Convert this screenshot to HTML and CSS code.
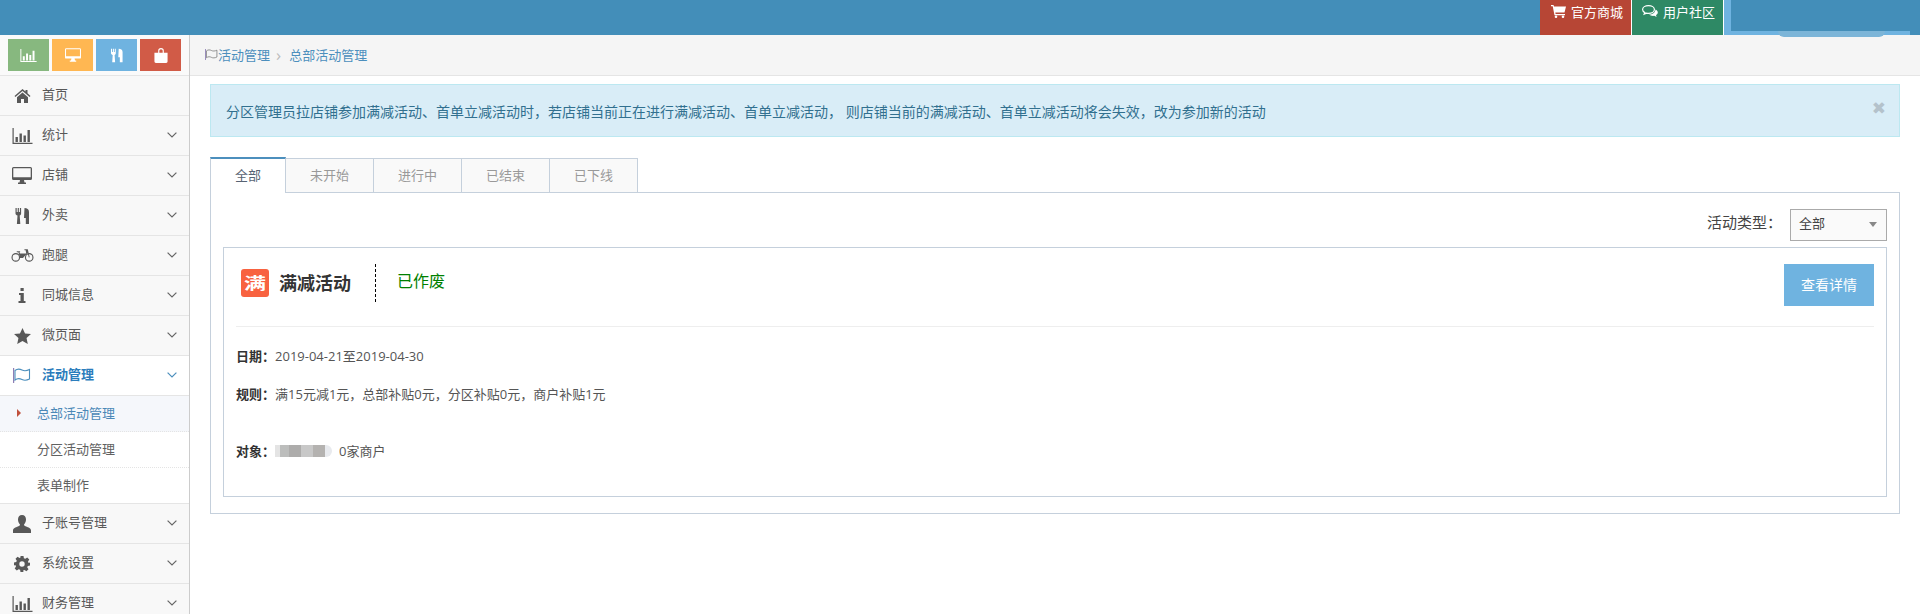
FILE: index.html
```html
<!DOCTYPE html>
<html lang="zh-CN">
<head>
<meta charset="utf-8">
<title>总部活动管理</title>
<link rel="stylesheet" href="styles.css">
</head>
<body>
<svg class="defs" width="0" height="0" aria-hidden="true">
  <symbol id="i-chart" viewBox="0 0 20 16"><path d="M0 0h1.200v14.800H20V16H0z"/><path d="M3 9h2.400v5H3zM7 5.500h2.400V14H7zM11 7.500h2.400V14H11zM15 2h2.400v12H15z"/></symbol>
  <symbol id="i-desk" viewBox="0 0 20 17"><path d="M1.500 0h17A1.500 1.500 0 0 1 20 1.500v10a1.500 1.500 0 0 1-1.500 1.500H12l.5 2.500H14V17H6v-1.500h1.500L8 13H1.500A1.500 1.500 0 0 1 0 11.500v-10A1.500 1.500 0 0 1 1.500 0zM1.300 1.300v8.900h17.400V1.300z" fill-rule="evenodd"/></symbol>
  <symbol id="i-fork" viewBox="0 0 14 16"><path d="M0 0h1.200v4h1V0h1.200v4h1V0h1.200v5.500c0 1-.6 1.700-1.400 2L4.800 16H1.400L2 7.500C.9 7.200 0 6.500 0 5.500zM9 0c2.500 0 4.500 1 4.500 4v12h-3.200v-6H8.500z"/></symbol>
  <symbol id="i-bag" viewBox="0 0 14 16"><path d="M4 5V3a3 3 0 0 1 6 0v2h4v9.500a1.500 1.500 0 0 1-1.500 1.500h-11A1.500 1.500 0 0 1 0 14.500V5zm1.200 0h3.600V3a1.800 1.800 0 0 0-3.600 0z" fill-rule="evenodd"/></symbol>
  <symbol id="i-home" viewBox="0 0 16 14"><path d="M8 0l3 2.500V1h2v3.200L16 7l-.9 1L8 2 .9 8 0 7zM2.500 8.200L8 3.500l5.500 4.700V14H9.500v-4h-3v4h-4z"/></symbol>
  <symbol id="i-bike" viewBox="0 0 24 13"><path d="M5 4a4.500 4.500 0 1 0 0 9 4.500 4.500 0 0 0 0-9zm0 1.200a3.300 3.300 0 1 1 0 6.600 3.300 3.300 0 0 1 0-6.600zM19 4a4.500 4.500 0 1 0 0 9 4.500 4.500 0 0 0 0-9zm0 1.200a3.300 3.300 0 1 1 0 6.600 3.300 3.300 0 0 1 0-6.600z" fill-rule="evenodd"/><path d="M14 0h3.500l2 8.300-.9.300-1.300-4.800-4.800 5.200h-3L7.700 3H6V2h3.500v1H8.800l.5 1.300h6.600L15.300 1H14z"/></symbol>
  <symbol id="i-info" viewBox="0 0 8 15"><path d="M2.500 0h3.200v3H2.500zM1 5h4.800v8H7.500v2H.5v-2h2V7H1z"/></symbol>
  <symbol id="i-star" viewBox="0 0 18 17"><path d="M9 0l2.700 5.800 6.300.7-4.700 4.200 1.300 6.300L9 13.800 3.400 17l1.300-6.300L0 6.500l6.300-.7z"/></symbol>
  <symbol id="i-flag" viewBox="0 0 18 15"><path d="M0 0h1.200v15H0z" fill="#8e7fb5"/><path d="M2 2.500C4.500.5 7 1 9 2s4.500 1 7.500-.5v9.500c-3 1.500-5.500 1.500-7.500.5s-4.500-1.500-7 .5z" fill="none" stroke="currentColor" stroke-width="1.100"/></symbol>
  <symbol id="i-user" viewBox="0 0 18 18"><path d="M9 0c2.600 0 4 2 4 4.500 0 2-.8 3.800-2 5 .2 1 .6 1.400 2 2 2.500 1 5 1.600 5 4V18H0v-2.500c0-2.400 2.500-3 5-4 1.400-.6 1.800-1 2-2-1.200-1.200-2-3-2-5C5 2 6.400 0 9 0z"/></symbol>
  <symbol id="i-cog" viewBox="0 0 16 16"><path d="M6.500 0h3l.4 2.200 1.400.6 1.900-1.300 2.100 2.100-1.300 1.900.6 1.400L16 6.500v3l-2.200.4-.6 1.400 1.300 1.900-2.100 2.100-1.900-1.300-1.400.6L9.500 16h-3l-.4-2.200-1.400-.6-1.900 1.300-2.100-2.100 1.300-1.900-.6-1.400L0 9.500v-3l2.200-.4.600-1.400L1.500 2.800l2.100-2.100 1.900 1.300 1-.6zM8 5.300a2.700 2.700 0 1 0 0 5.400 2.700 2.700 0 0 0 0-5.400z" fill-rule="evenodd"/></symbol>
  <symbol id="i-cart" viewBox="0 0 15 13"><path d="M0 0h2.500l.5 1.500h12l-1.500 6H4.300l.3 1.500h9.400v1.200H3.500L1.700 1.200H0z"/><circle cx="5" cy="11.700" r="1.300"/><circle cx="12" cy="11.700" r="1.300"/></symbol>
  <symbol id="i-chat" viewBox="0 0 16 13"><path d="M6.500.6C3.200.6.600 2.300.6 4.500c0 1.300.9 2.400 2.300 3.100l-.7 1.600 2.300-1c.6.100 1.300.2 2 .2 3.300 0 5.900-1.700 5.900-3.900S9.800.6 6.500.6z" fill="none" stroke="currentColor" stroke-width="1.200"/><path d="M13.500 4.500c1.300.6 2.300 1.700 2.300 3 0 1-.7 2-1.800 2.700l.6 1.800-2.300-1.200c-2 .3-4-.2-5.300-1.300 3.400 0 6.400-2 6.500-5z"/></symbol>
  <symbol id="i-down" viewBox="0 0 10 6"><path d="M.6.600L5 5 9.400.6" fill="none" stroke="currentColor" stroke-width="1.200"/></symbol>
</svg>

<header class="topbar">
  <a class="top-link top-red"><svg class="top-ico"><use href="#i-cart"/></svg>官方商城</a>
  <a class="top-link top-green"><svg class="top-ico"><use href="#i-chat"/></svg>用户社区</a>
  <div class="user-box"><div class="user-mask"></div><div class="user-blur"></div></div>
</header>

<div class="shell">
  <aside class="sidebar">
    <div class="shortcuts">
      <a class="sc sc-green"><svg class="sc-chart"><use href="#i-chart"/></svg></a>
      <a class="sc sc-orange"><svg class="sc-desk"><use href="#i-desk"/></svg></a>
      <a class="sc sc-blue"><svg class="sc-fork"><use href="#i-fork"/></svg></a>
      <a class="sc sc-red"><svg class="sc-bag"><use href="#i-bag"/></svg></a>
    </div>
    <nav>
      <a class="nav-item"><span class="nav-icon"><svg class="ic-home"><use href="#i-home"/></svg></span>首页</a>
      <a class="nav-item"><span class="nav-icon"><svg class="ic-chart"><use href="#i-chart"/></svg></span>统计<svg class="chev"><use href="#i-down"/></svg></a>
      <a class="nav-item"><span class="nav-icon"><svg class="ic-desk"><use href="#i-desk"/></svg></span>店铺<svg class="chev"><use href="#i-down"/></svg></a>
      <a class="nav-item"><span class="nav-icon"><svg class="ic-fork"><use href="#i-fork"/></svg></span>外卖<svg class="chev"><use href="#i-down"/></svg></a>
      <a class="nav-item"><span class="nav-icon"><svg class="ic-bike"><use href="#i-bike"/></svg></span>跑腿<svg class="chev"><use href="#i-down"/></svg></a>
      <a class="nav-item"><span class="nav-icon"><svg class="ic-info"><use href="#i-info"/></svg></span>同城信息<svg class="chev"><use href="#i-down"/></svg></a>
      <a class="nav-item"><span class="nav-icon"><svg class="ic-star"><use href="#i-star"/></svg></span>微页面<svg class="chev"><use href="#i-down"/></svg></a>
      <a class="nav-item nav-open"><span class="nav-icon"><svg class="ic-flag"><use href="#i-flag"/></svg></span>活动管理<svg class="chev"><use href="#i-down"/></svg></a>
      <div class="subnav">
        <a class="sub-item sub-active"><span class="sub-arrow"></span>总部活动管理</a>
        <a class="sub-item">分区活动管理</a>
        <a class="sub-item">表单制作</a>
      </div>
      <a class="nav-item"><span class="nav-icon"><svg class="ic-user"><use href="#i-user"/></svg></span>子账号管理<svg class="chev"><use href="#i-down"/></svg></a>
      <a class="nav-item"><span class="nav-icon"><svg class="ic-cog"><use href="#i-cog"/></svg></span>系统设置<svg class="chev"><use href="#i-down"/></svg></a>
      <a class="nav-item"><span class="nav-icon"><svg class="ic-chart"><use href="#i-chart"/></svg></span>财务管理<svg class="chev"><use href="#i-down"/></svg></a>
    </nav>
  </aside>

  <main class="main">
    <div class="crumbs">
      <svg class="crumb-flag"><use href="#i-flag"/></svg><span>活动管理</span><span class="crumb-sep">›</span><span>总部活动管理</span>
    </div>
    <div class="content">
      <div class="alert">
        <span>分区管理员拉店铺参加满减活动、首单立减活动时，若店铺当前正在进行满减活动、首单立减活动， 则店铺当前的满减活动、首单立减活动将会失效，改为参加新的活动</span>
        <span class="alert-close">✖</span>
      </div>
      <div class="tabs">
        <a class="tab tab-active">全部</a>
        <a class="tab">未开始</a>
        <a class="tab">进行中</a>
        <a class="tab">已结束</a>
        <a class="tab">已下线</a>
      </div>
      <section class="panel">
        <div class="filter">
          <label class="filter-label">活动类型：</label>
          <div class="select">全部<span class="caret"></span></div>
        </div>
        <article class="card">
          <div class="card-head">
            <span class="badge"><span class="badge-glyph">满</span></span>
            <h2 class="card-title">满减活动</h2>
            <span class="state">已作废</span>
            <a class="detail-btn">查看详情</a>
          </div>
          <p class="row row-date"><b>日期：</b>2019-04-21至2019-04-30</p>
          <p class="row row-rule"><b>规则：</b>满15元减1元，总部补贴0元，分区补贴0元，商户补贴1元</p>
          <p class="row row-target"><b>对象：</b><span class="blur"><i class="b0"></i><i class="b1"></i><i class="b2"></i><i class="b3"></i><i class="b4"></i><i class="b5"></i></span>0家商户</p>
        </article>
      </section>
    </div>
  </main>
</div>
</body>
</html>
```

FILE: styles.css
```css
* { box-sizing: border-box; }
html, body { margin: 0; height: 100%; overflow: hidden; background: #fff; }
body { font-family: "Open Sans", "Noto Sans CJK SC", sans-serif; font-size: 13px; color: #393939; }
.defs { position: absolute; }
svg { fill: currentColor; display: block; }

.topbar { height: 35px; background: #438eb9; display: flex; justify-content: flex-end; position: relative; z-index: 2; }
.top-link { width: 92px; height: 35px; border-right: 1px solid #fff; color: #fff; display: flex; align-items: flex-start; padding: 3px 0 0 11px; line-height: 18px; font-size: 13px; }
.top-red { background: #b74635; }
.top-green { background: #2e8965; padding-left: 10px; }
.top-ico { width: 15px; height: 13px; margin: 2px 5px 0 0; flex: none; }
.top-green .top-ico { width: 16px; }
.user-box { width: 196px; height: 35px; display: flex; flex-direction: column; position: relative; padding-left: 7px; background-image: linear-gradient(to right, #6fb3e0 186px, #438eb9 186px); }
.user-mask { width: 179px; height: 31px; background: #438eb9; }
.user-blur { position: absolute; left: 54px; top: 31px; width: 107px; height: 6px; background: #7cb5d8; border-radius: 0 0 50px 50px; }

.shell { display: flex; height: 579px; }
.sidebar { width: 190px; flex: none; background: #f7f7f7; border-right: 1px solid #ccc; overflow: hidden; }
.shortcuts { height: 41px; background: #fafafa; border-bottom: 1px solid #e5e5e5; padding: 4px 0 0 8px; display: flex; gap: 3px; }
.sc { width: 41px; height: 32px; color: #fff; display: flex; align-items: center; justify-content: center; }
.sc-green { background: #87b87f; }
.sc-orange { background: #ffb752; }
.sc-blue { background: #6fb3e0; }
.sc-red { background: #d15b47; }
.sc-chart { width: 17px; height: 13px; }
.sc-desk { width: 16px; height: 14px; }
.sc-fork { width: 12px; height: 15px; }
.sc-bag { width: 14px; height: 15px; }

.nav-item { height: 40px; border-bottom: 1px solid #e5e5e5; display: flex; align-items: center; color: #585858; background: #f8f8f8; position: relative; padding-bottom: 4px; }
.nav-icon { width: 44px; margin-right: -2px; margin-top: 4px; display: flex; justify-content: center; flex: none; color: #585858; }
.chev { width: 10px; height: 6px; position: absolute; left: 167px; top: 16px; color: #666; }
.nav-open { background: #fff; color: #2b7dbc; font-weight: 600; }
.nav-open .nav-icon, .nav-open .chev { color: #4c8fbd; }
.ic-home { width: 17px; height: 14px; }
.ic-chart { width: 21px; height: 16px; }
.ic-desk { width: 20px; height: 17px; }
.ic-fork { width: 15px; height: 16px; }
.ic-bike { width: 23px; height: 13px; }
.ic-info { width: 8px; height: 15px; }
.ic-star { width: 17px; height: 16px; }
.ic-flag { width: 18px; height: 15px; }
.ic-user { width: 18px; height: 18px; }
.ic-cog { width: 16px; height: 16px; }

.subnav { background: #fff; border-bottom: 1px solid #e5e5e5; }
.sub-item { height: 36px; padding: 0 0 3px 37px; display: flex; align-items: center; color: #616161; border-bottom: 1px dotted #e4e4e4; position: relative; }
.sub-item:last-child { border-bottom: 0; height: 35px; }
.sub-active { background: #f5f7fb; color: #4b88b7; }
.sub-arrow { position: absolute; left: 17px; top: 13px; width: 0; height: 0; border: 4px solid transparent; border-left-color: #c0503c; border-right: 0; }

.main { flex: 1; min-width: 0; }
.crumbs { height: 41px; background: #f5f5f5; border-bottom: 1px solid #e5e5e5; display: flex; align-items: center; padding: 0 0 2px 15px; color: #4c8fbd; font-size: 13px; }
.crumb-flag { width: 13px; height: 11px; color: #7a7a7a; flex: none; }
.crumb-sep { color: #bbb; margin: 0 8px 0 6px; font-size: 17px; line-height: 15px; }
.content { padding: 8px 20px 0 20px; }
.alert { height: 53px; background: #d9edf7; border: 1px solid #bce8f1; color: #31708f; display: flex; align-items: center; justify-content: space-between; padding: 0 13px 0 15px; font-size: 14px; }
.alert-close { font-family: "DejaVu Sans", sans-serif; font-size: 17px; color: #b4c2cb; line-height: 18px; margin-top: -5px; }
.tabs { display: flex; margin-top: 20px; height: 36px; }
.tab { width: 88px; height: 35px; background: #f9f9f9; border: 1px solid #c5d0dc; border-left: 0; color: #999; display: flex; align-items: center; justify-content: center; padding-bottom: 3px; margin-top: 1px; }
.tab-active { width: 76px; height: 36px; margin-top: 0; background: #fff; border-left: 1px solid #c5d0dc; border-top: 2px solid #4c8fbd; border-bottom: 0; color: #576373; position: relative; z-index: 1; }
.panel { height: 322px; margin-top: -1px; border: 1px solid #c5d0dc; padding: 0 12px; }
.filter { height: 54px; display: flex; justify-content: flex-end; align-items: flex-start; padding-top: 16px; }
.filter-label { font-family: "Open Sans", "Noto Sans CJK TC", sans-serif; font-size: 15px; line-height: 18px; margin: 4px 2px 0 0; color: #444; width: 81px; }
.select { width: 97px; height: 32px; border: 1px solid #aaa; background: #fafafa; padding-left: 8px; line-height: 27px; color: #444; font-size: 13px; position: relative; }
.caret { position: absolute; right: 9px; top: 12px; width: 0; height: 0; border: 4px solid transparent; border-top: 5px solid #888; border-bottom: 0; }
.card { height: 250px; border: 1px solid #c5d0dc; padding: 0 12px; }
.card-head { height: 79px; border-bottom: 1px solid #eee; display: flex; align-items: flex-start; }
.badge { width: 28px; height: 28px; margin: 21px 0 0 5px; background: #f86240; border-radius: 3px; color: #fff; font-size: 22px; font-weight: 700; line-height: 27px; text-align: center; flex: none; overflow: hidden; }
.badge-glyph { display: block; transform: scaleY(.72); }
.card-title { margin: 16px 0 0 10px; width: 97px; height: 38px; padding-top: 7px; font-size: 18px; font-weight: 700; color: #333; line-height: 24px; border-right: 1px dashed #000; }
.state { margin: 22px 0 0 21px; color: #008000; font-size: 16px; line-height: 22px; }
.detail-btn { margin: 16px 0 0 auto; width: 90px; height: 42px; background: #6fb3e0; color: #fff; display: flex; align-items: center; justify-content: center; font-size: 14px; padding-bottom: 2px; }
.row { margin: 0; line-height: 18px; color: #555; font-size: 13px; }
.row b { font-family: "Open Sans", "Noto Sans CJK TC", sans-serif; color: #333; font-weight: 700; }
.row-date { margin-top: 20px; }
.row-rule { margin-top: 20px; }
.row-target { margin-top: 39px; display: flex; align-items: center; }
.blur { display: flex; width: 57px; height: 12px; margin-right: 7px; }
.blur i { display: block; height: 12px; width: 12px; }
.blur .b0 { width: 5px; background: #e4e4e4; }
.blur .b1 { width: 9px; background: #bcbdbc; }
.b2 { background: #adacab; }
.b3 { background: #c8c8c8; }
.b4 { background: #b4b2b0; }
.blur .b5 { width: 7px; background: #e8eaee; border-radius: 0 6px 6px 0; }
```
